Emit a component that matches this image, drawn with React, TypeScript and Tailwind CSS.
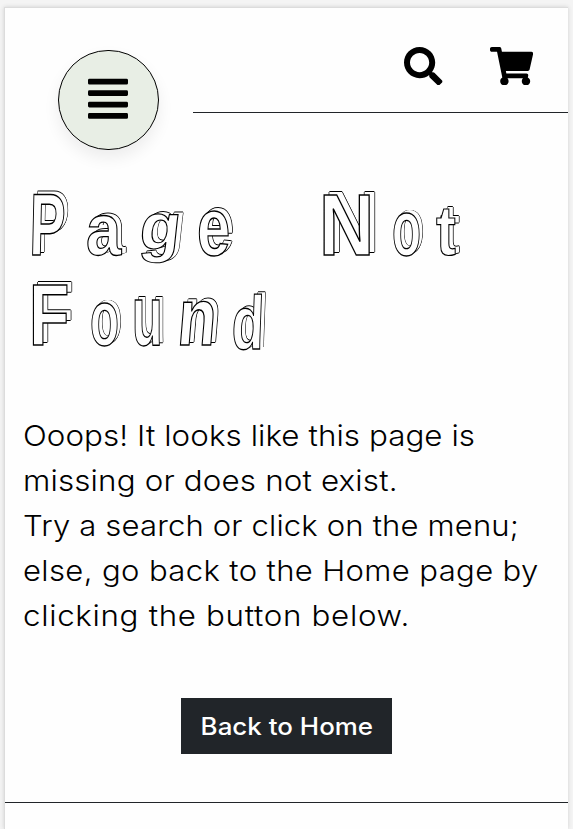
import { FaAlignJustify, FaSearch, FaShoppingCart } from "react-icons/fa";

const glyph =
  "inline-block h-[90px] shrink-0 origin-[0_76px] whitespace-nowrap [-webkit-text-stroke:1.5px_#000] [text-shadow:6px_-3px_0_#fefefe,6.9px_-3px_0_#000,5.1px_-3px_0_#000,6px_-3.9px_0_#000,6px_-2.1px_0_#000]";

function Title() {
  return (
    <h1 className="h-[180px] pl-[24px] font-['Liberation_Sans',Arial,sans-serif] text-[88px] leading-[90px] font-bold text-[#fefefe]">
      <span className="flex h-[90px]">
        <span className={`${glyph} w-[57px] scale-x-[.61] -skew-x-2`}>P</span>
        <span className={`${glyph} w-[52px] scale-x-[.72] scale-y-[.84]`}>a</span>
        <span className={`${glyph} w-[59px] -translate-y-[6px] scale-x-[.76] scale-y-[.74] -skew-x-6`}>g</span>
        <span className={`${glyph} w-[122px] scale-x-[.68] scale-y-[.92]`}>e</span>
        <span className={`${glyph} w-[73px] scale-x-[.87]`}>N</span>
        <span className={`${glyph} w-[44px] scale-x-[.54] scale-y-[.88]`}>o</span>
        <span className={`${glyph} w-[30px] scale-x-[.68] scale-y-[.8]`}>t</span>
      </span>
      <span className="flex h-[90px]">
        <span className={`${glyph} w-[61px] scale-x-[.75]`}>F</span>
        <span className={`${glyph} w-[42px] scale-x-[.54] scale-y-[.88]`}>o</span>
        <span className={`${glyph} w-[44px] scale-x-[.57] scale-y-[.97]`}>u</span>
        <span className={`${glyph} w-[55px] scale-x-[.72] scale-y-[.92] -skew-x-6`}>n</span>
        <span className={`${glyph} w-[40px] translate-y-[4px] scale-x-[.6] scale-y-[.86] -skew-x-3`}>d</span>
      </span>
    </h1>
  );
}

export default function App() {
  return (
    <div className="h-[829px] overflow-hidden bg-[#f4f4f4] pt-[7px] pl-[4px] font-[Inter,'Open_Sans',sans-serif]">
      <div className="h-[822px] w-[564px] border-t border-l border-[#dcdcdc] bg-[#fefefe] shadow-[0_0_4px_#d0d0d0]">
        <header className="flex h-[105px]">
          <button
            aria-label="Menu"
            className="mt-[42px] ml-[53px] flex h-[100px] w-[101px] shrink-0 items-center justify-center rounded-full border border-black bg-[#e8eee5] shadow-[0_8px_16px_rgba(0,0,0,0.07)]"
          >
            <FaAlignJustify className="mr-px h-[45.7px] w-[40px] -translate-y-[1px] text-black" />
          </button>
          <div className="ml-[34px] flex flex-1 justify-end gap-[47px] border-b border-[#212529] pt-[39px] pr-[35px] text-black">
            <FaSearch className="h-[38.4px] w-[38.4px]" />
            <FaShoppingCart className="h-[38.4px] w-[43.2px]" />
          </div>
        </header>
        <main className="pt-[67px]">
          <Title />
          <p className="mt-[53px] flex flex-col pl-[18px] text-[29px] leading-[45px] font-[260] whitespace-nowrap text-black">
            <span className="origin-left scale-x-[1.08] tracking-[.07px]">Ooops! It looks like this page is</span>
            <span className="origin-left scale-x-[1.08] tracking-[.15px]">missing or does not exist.</span>
            <span className="origin-left scale-x-[1.07] tracking-[.15px]">Try a search or click on the menu;</span>
            <span className="origin-left scale-x-[1.07] tracking-[.35px]">else, go back to the Home page by</span>
            <span className="origin-left scale-x-[1.08] tracking-[.62px]">clicking the button below.</span>
          </p>
          <div className="mt-[60px] flex pl-[176px]">
            <button className="h-[56px] w-[211px] bg-[#212529] pt-[2px] text-[24px] font-medium whitespace-nowrap text-white">
              <span className="inline-block scale-x-[1.08]">Back to Home</span>
            </button>
          </div>
        </main>
        <footer className="mt-[48px] border-t border-[#212529]" />
      </div>
    </div>
  );
}
